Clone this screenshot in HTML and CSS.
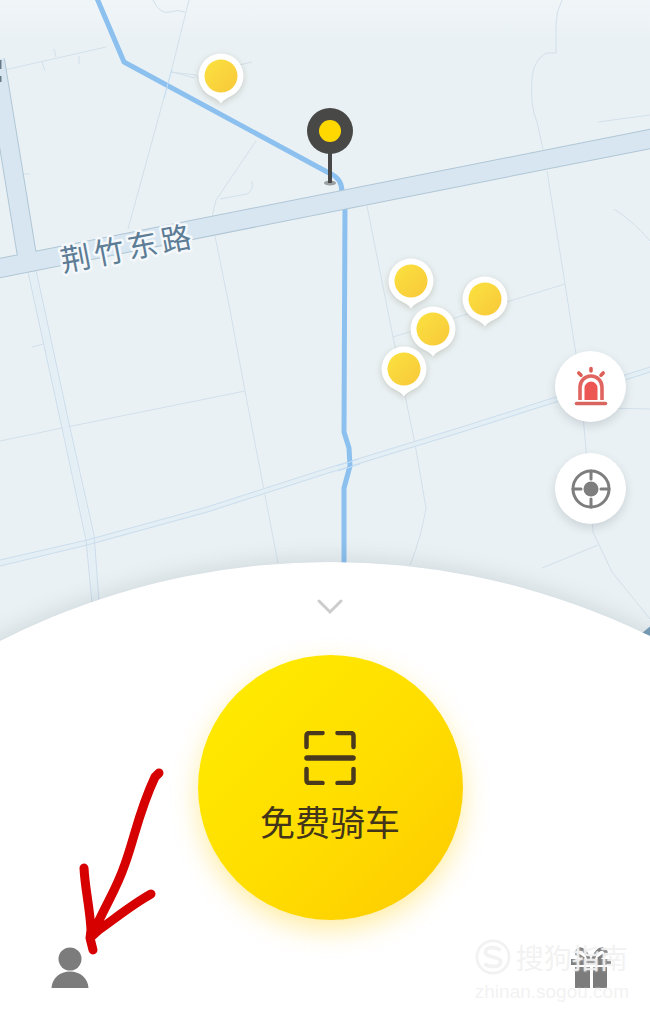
FILE: index.html
```html
<!DOCTYPE html>
<html lang="zh-CN">
<head>
<meta charset="utf-8">
<meta name="viewport" content="width=device-width, initial-scale=1">
<title>免费骑车</title>
<link rel="stylesheet" href="styles.css">
</head>
<body>
<svg class="defs" width="0" height="0" aria-hidden="true">
  <defs>
    <linearGradient id="pin-fill" x1="0" y1="0" x2="1" y2="1">
      <stop offset="0" stop-color="#fbe23f"/>
      <stop offset="1" stop-color="#f8c83a"/>
    </linearGradient>
    <symbol id="bike-pin" viewBox="0 0 46 52">
      <path d="M23 0.5a22.5 22.5 0 0 1 12 41.5c-4 2.400-9 4-12 8.500c-3-4.500-8-6.100-12-8.500A22.500 22.500 0 0 1 23 .5z" fill="#fff"/>
      <circle cx="23" cy="23" r="16.500" fill="url(#pin-fill)"/>
    </symbol>
  </defs>
</svg>

<main class="app">
  <section class="map" aria-label="地图">
    <svg class="map-canvas" viewBox="0 0 650 650" preserveAspectRatio="xMidYMin slice" fill="none">
      <g class="lane">
        <path d="M0 71L106 47M54 49l2 8M42 62l3 9M79 56v8"/>
        <path d="M189 0L171 72L128 229"/>
        <path d="M153 0q7 15 17 12q8-3 15 0"/>
        <path d="M171 72l25 3l4 5M235 66l17-4M172 72l23 6"/>
        <path d="M256 141L216 200l-4 17M220 199l27-5q7-4 5-13"/>
        <path d="M215 236L230 310L245 391L278 563"/>
        <path d="M0 441L62 428L245 391"/>
        <path d="M22 174h8M32 347l11-3"/>
        <path d="M562 0q-6 12-6 24v29h-10q-12 7-14 24q-2 30 5 45l6 27"/>
        <path d="M598 122l52-7M614 209q20 13 36 32"/>
        <path d="M367 206L393 337L415 444L426 508q-5 30-16 57"/>
        <path d="M393 337L565 284"/>
        <path d="M547 171L565 284L580 380L586 450L593 532L612 572L650 619"/>
        <path d="M542 568l56-23M600 408l50 1"/>
      </g>
      <path class="street-fill" d="M32 271L66 428L90 538L96 602M0 563L87 543L207 510L325 472L465 429L650 370"/>
      <g class="street">
        <path d="M28 272L62 428L86 540L92 603M36 270L70 428L94 535L99 600"/>
        <path d="M0 560L87 540L207 507L325 469L465 426L650 367"/>
        <path d="M0 566L87 545L207 512L325 474L465 431L650 372"/>
      </g>
      <path class="river" d="M96-4L124 62L329 173Q342 178 342 192M345 205L344 432L349 448L350 466L344 488V580"/>
      <path class="street-over" d="M337 466l22-7M338 471l22-7M164 98l8-29"/>
      <path class="road-edge" d="M-5 60L28 262M-10 270L660 137"/>
      <path class="road-fill" d="M-5 60L28 262M-10 270L660 137"/>
      <path d="M642 633l10-8v12z" fill="#799fb8"/>
      <path d="M0 60v9M0 76v6" stroke="#697b87" stroke-width="3"/>
      <text class="road-name" transform="translate(63 272) rotate(-11)" x="0 34 68 102">荆竹东路</text>
    </svg>

    <button class="pin pin-a" type="button" aria-label="单车 1"><svg><use href="#bike-pin"/></svg></button>
    <button class="pin pin-b" type="button" aria-label="单车 2"><svg><use href="#bike-pin"/></svg></button>
    <button class="pin pin-c" type="button" aria-label="单车 3"><svg><use href="#bike-pin"/></svg></button>
    <button class="pin pin-d" type="button" aria-label="单车 4"><svg><use href="#bike-pin"/></svg></button>
    <button class="pin pin-e" type="button" aria-label="单车 5"><svg><use href="#bike-pin"/></svg></button>

    <svg class="here" viewBox="0 0 46 78" role="img" aria-label="当前位置">
      <ellipse cx="23" cy="75" rx="6" ry="2.500" fill="#9a9fa0"/>
      <path d="M23 40v35" stroke="#484848" stroke-width="4"/>
      <circle cx="23" cy="23" r="23" fill="#484846"/>
      <circle cx="23" cy="23" r="11" fill="#ffd800"/>
    </svg>

    <div class="tools">
      <button class="tool" type="button" aria-label="报警求助">
        <svg width="34" height="44" viewBox="0 0 34 44" fill="none" stroke-linecap="round">
          <path d="M2.500 38.500h29" stroke="#d9655f" stroke-width="3.600"/>
          <path d="M6 35V22a11 11 0 0 1 22 0V35" stroke="#e0645f" stroke-width="3.600" stroke-linecap="butt"/>
          <path d="M10.500 35V23a6.500 6.500 0 0 1 13 0V35z" fill="#ec5753"/>
          <path d="M17 3.500v2.500M4.800 8l2.200 2.200M29.200 8l-2.200 2.200" stroke="#dc5f57" stroke-width="3.600"/>
        </svg>
      </button>
      <button class="tool" type="button" aria-label="定位">
        <svg width="40" height="40" viewBox="0 0 40 40" fill="none" stroke="#7e7e7e" stroke-width="3">
          <circle cx="20" cy="20" r="18"/>
          <path d="M20 2v8M20 30v8M2 20h8M30 20h8" stroke-linecap="round"/>
          <circle cx="20" cy="20" r="7.500" fill="#7e7e7e" stroke="none"/>
        </svg>
      </button>
    </div>
  </section>

  <section class="panel">
    <button class="collapse" type="button" aria-label="收起">
      <svg width="28" height="18" viewBox="0 0 28 18" fill="none" stroke="#ccc" stroke-width="3" stroke-linecap="round"><path d="M3 3l11 11L25 3"/></svg>
    </button>
    <button class="ride" type="button">
      <svg width="52" height="54" viewBox="0 0 52 54" fill="none" stroke="#493a1e" stroke-width="4.500" stroke-linecap="round" stroke-linejoin="round">
        <path d="M2.500 16V5q0-3 3-3h13M33.500 2h13q3 0 3 3v11M2.500 38v11q0 3 3 3h13M33.500 52h13q3 0 3-3V38"/>
        <path d="M3 27h46" stroke-width="5.500"/>
      </svg>
      <span>免费骑车</span>
    </button>
    <nav class="nav" aria-label="底部导航">
      <a class="nav-link" href="#profile" aria-label="我的">
        <svg width="38" height="42" viewBox="0 0 38 42" fill="#7c7c7c"><circle cx="19" cy="12" r="11.500"/><path d="M.5 41C1 31 9 24.500 19 24.500S37 31 37.500 41z"/></svg>
      </a>
      <a class="nav-link" href="#gifts" aria-label="礼物">
        <svg width="40" height="42" viewBox="0 0 40 42" fill="#7c7c7c">
          <path d="M0 12h40v6H0zM4 20h15v21H4zM22 20h14v21H22z"/>
          <path d="M18 12Q14 2 9 2Q5 3 6 8M22 12Q26 2 31 2Q36 3 35 8" fill="none" stroke="#7c7c7c" stroke-width="3.500"/>
          <path d="M6 7l7 5M34 7l-7 5" stroke="#7c7c7c" stroke-width="3"/>
        </svg>
      </a>
    </nav>
    <div class="watermark">
      <div class="brand">
        <svg width="36" height="36" viewBox="0 0 38 38" fill="none"><circle cx="19" cy="19" r="17" stroke="#f2f2f2" stroke-width="3"/><path d="M27 12q-3-3-9-3q-7 0-7 5c0 6 16 4 16 10q0 5-8 5q-6 0-9-3" stroke="#f2f2f2" stroke-width="4"/></svg>
        <span>搜狗指南</span>
      </div>
      <span class="site">zhinan.sogou.com</span>
    </div>
    <svg class="arrow" viewBox="0 0 84 188" fill="none" stroke="#d60000" stroke-width="9" stroke-linecap="round" stroke-linejoin="round" aria-hidden="true">
      <path d="M80 5L76 9C60 43 56 68 46 96C37 123 24 141 14 166L11 170M5 100C6 121 11 140 12 162L11 170L14 182M72 126C54 136 38 149 21 161L11 170"/>
    </svg>
  </section>
</main>
</body>
</html>
```

FILE: styles.css
```css
* {
  box-sizing: border-box;
}

body {
  margin: 0;
  background: #fff;
  font-family: "Noto Sans CJK SC", "Noto Sans", sans-serif;
}

button {
  padding: 0;
  border: 0;
  background: none;
  font: inherit;
  cursor: pointer;
}

svg {
  display: block;
}

.defs {
  position: absolute;
}

.app {
  display: flex;
  flex-direction: column;
  min-height: 100vh;
  overflow: hidden;
}

/* Map */
.map {
  position: relative;
  aspect-ratio: 1;
  background: linear-gradient(#f0f5f8, #eaf1f4 40px);
}

.map-canvas {
  width: 100%;
  height: 100%;
}

.lane {
  stroke: #d2e0ea;
  stroke-width: 1;
}

.street-fill {
  stroke: #e4eff5;
  stroke-width: 6;
}

.street {
  stroke: #cbddec;
  stroke-width: 1;
}

.street-over {
  stroke: #c5dff5;
  stroke-width: 1;
}

.river {
  stroke: #8bc0ef;
  stroke-width: 5;
  stroke-linejoin: round;
}

.road-edge {
  stroke: #b0c6d6;
  stroke-width: 20;
}

.road-fill {
  stroke: #d7e6f0;
  stroke-width: 18;
}

.road-name {
  fill: #5d7c95;
  stroke: #f4f8fb;
  stroke-width: 5;
  stroke-linejoin: round;
  paint-order: stroke;
  font-size: 30px;
}

.pin {
  position: absolute;
  width: 46px;
  height: 52px;
  margin: -23px 0 0 -23px;
  filter: drop-shadow(0 2px 3px rgba(90, 90, 50, 0.25));
}

.pin svg {
  width: 100%;
  height: 100%;
}

.pin-a { left: 34%; top: 11.7%; }
.pin-b { left: 63.2%; top: 43.2%; }
.pin-c { left: 74.6%; top: 46%; }
.pin-d { left: 66.6%; top: 50.6%; }
.pin-e { left: 62.2%; top: 56.7%; }

.here {
  position: absolute;
  left: 50.8%;
  top: 16.6%;
  width: 46px;
  margin-left: -23px;
}

.tools {
  position: absolute;
  top: 54%;
  right: 24px;
  display: flex;
  flex-direction: column;
  gap: 31px;
}

.tool {
  display: grid;
  place-items: center;
  width: 71px;
  height: 71px;
  border-radius: 50%;
  background: #fff;
  box-shadow: 0 4px 10px rgba(60, 80, 90, 0.18);
}

/* Panel */
.panel {
  position: relative;
  z-index: 1;
  flex: 1;
  display: flex;
  flex-direction: column;
  align-items: center;
  margin-top: -88px;
  padding: 32px 0 37px 10px;
}

.panel::before {
  content: "";
  position: absolute;
  z-index: -1;
  top: 0;
  left: calc(50% + 5px);
  width: 1458px;
  height: 1458px;
  margin-left: -729px;
  border-radius: 50%;
  background: #fff;
  box-shadow: 0 0 24px rgba(70, 90, 100, 0.2);
}

.collapse {
  display: grid;
  place-items: center;
  width: 48px;
  height: 26px;
}

.ride {
  display: flex;
  flex-direction: column;
  align-items: center;
  gap: 11px;
  width: 265px;
  height: 265px;
  margin-top: 35px;
  padding-top: 76px;
  border-radius: 50%;
  background: linear-gradient(135deg, #ffea00 10%, #ffdd00 55%, #fdc900);
  box-shadow: 0 10px 26px rgba(255, 208, 20, 0.38);
  color: #42351a;
  font-size: 35px;
  line-height: 50px;
}

.nav {
  align-self: stretch;
  display: flex;
  justify-content: space-between;
  margin-top: 27px;
  padding: 0 39px 0 41px;
}

/* Overlays */
.watermark {
  position: absolute;
  right: 21px;
  bottom: 20px;
  color: rgba(240, 240, 240, 0.85);
  font-size: 19px;
  line-height: 28px;
  text-shadow: 0 0 2px #fff;
  pointer-events: none;
}

.brand {
  display: flex;
  align-items: center;
  gap: 5px;
  font-size: 28px;
  line-height: 38px;
}

.site {
  font-family: "Liberation Sans", Arial, sans-serif;
}

.arrow {
  position: absolute;
  left: 79px;
  bottom: 70px;
  width: 84px;
  overflow: visible;
  pointer-events: none;
}
```
